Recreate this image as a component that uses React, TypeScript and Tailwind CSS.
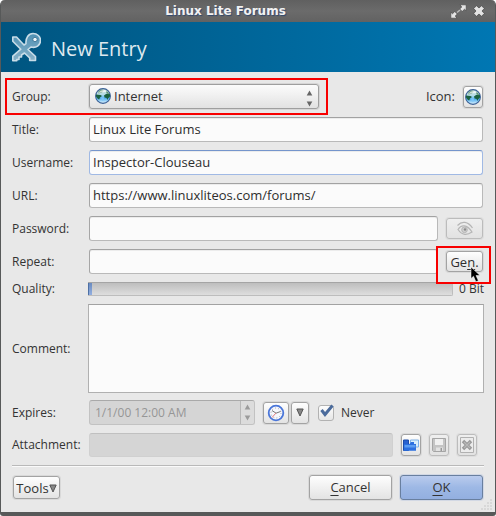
import React from 'react';

const FIELD =
  'h-[25px] min-w-0 flex-1 rounded-[3px] border border-[#b9b9b9] border-t-[#a2a2a2] border-l-[#a6a6a6] bg-[#fbfbfb] px-[3px] pb-px text-[13px] text-[#2e2e2e] shadow-[inset_0_1px_0_#ececec] outline-none';
const BUTTON =
  'flex items-center justify-center rounded-[3px] border border-[#a3a3a3] bg-linear-to-b from-[#fefefe] to-[#e3e3e3] shadow-[0_0_0_1px_#d9d9d9]';
const BUTTON_OFF =
  'flex items-center justify-center rounded-[3px] border border-[#bcbcbc] bg-linear-to-b from-[#efefef] to-[#e2e2e2] shadow-[0_0_0_1px_#dedede]';
const LABEL = 'w-[77px] shrink-0 text-[12px]';

function Globe() {
  return (
    <svg width="16" height="16" viewBox="0 0 16 16" aria-hidden="true">
      <defs>
        <linearGradient id="sea" x1="0" y1="0" x2="0" y2="1">
          <stop offset="0" stopColor="#cfe3dc" />
          <stop offset=".4" stopColor="#b5dce6" />
          <stop offset=".65" stopColor="#51aef0" />
          <stop offset="1" stopColor="#e6f8ff" />
        </linearGradient>
      </defs>
      <circle cx="8" cy="8" r="7.4" fill="url(#sea)" stroke="#3a5f94" strokeWidth="1.1" />
      <path d="M1 6.500l4.500.5 1.500 1-2 1.500-.8 2-1.200-.5-2-2.500zM9 7.500l2-1.500h4v2.500l-2 2-.5 1.500-1-2-2-.5z" fill="#1a6140" />
      <path d="M3.500 3l3.500-1.500 2 1-2 2-3.500 1zM11 2.500l2 1.500 1.500 2.500-3-1z" fill="#5d9474" />
      <path d="M3.500 5C5 1.500 10 1 12 3.500c-2 1-5 .3-8.500 1.500z" fill="#fff" opacity=".7" />
      <path d="M6 9.500h3l-.5 3H7z" fill="#7cc6fa" />
    </svg>
  );
}

function Arrows({ color, className }: { color: string; className: string }) {
  return (
    <svg className={className} width="7" height="17" viewBox="0 0 7 17" aria-hidden="true">
      <path d="M.7 5.500L3.500.5 6.300 5.500zM.7 11.500h5.600L3.500 16.500z" fill={color} />
    </svg>
  );
}

function DownArrow() {
  return (
    <svg width="8" height="9" viewBox="0 0 8 9" aria-hidden="true">
      <path d="M.8 1h6.400L4 8z" fill="#888" stroke="#555" />
    </svg>
  );
}

function CrossedKey() {
  return (
    <svg width="30" height="30" viewBox="0 0 30 30" aria-hidden="true">
      <defs>
        <linearGradient id="steel" x1="0" y1="0" x2="0" y2="1">
          <stop offset="0" stopColor="#4f91b4" />
          <stop offset="1" stopColor="#88b2c8" />
        </linearGradient>
      </defs>
      <path
        d="M1.800 5h3.700l7.500 8 2-1.500C14.500 6 17.500 1.500 22 1.500c4.300 0 7.500 3 7.500 6.800 0 5-4.500 8.200-9.500 6.700l-3 2.500 7.500 7v4h-5.800v-2.500l-5.200-5-3 2v2H8v2.500H5.800v1.200H1.800v-4.500l8-7-8-8z"
        fill="url(#steel)"
        stroke="#c9dde8"
        strokeWidth="1.600"
        strokeLinejoin="round"
      />
      <circle cx="24" cy="7.500" r="2.200" fill="#f1f7fa" stroke="#28668a" strokeWidth=".8" />
    </svg>
  );
}

function TitleBar() {
  return (
    <header className="flex h-[22px] items-center rounded-t-[4px] bg-linear-to-b from-[#606060] via-[#6b6b6b] to-[#626262] pr-[10px]">
      <h1 className="flex-1 text-center font-['DejaVu_Sans'] text-[12px] leading-[20px] font-bold text-[#f2f2f2] [text-shadow:1px_1px_1px_#30476e]">
        Linux Lite Forums
      </h1>
      <div className="flex items-center gap-[6px]">
        <button aria-label="Maximize">
          <svg width="17" height="15" viewBox="0 0 17 15">
            <path
              d="M10 .8h6.200v6l-1.700-1.500-2.300 2.200-2.500-2.500 2-2zM.8 8.200l1.700 1.500 2.300-2.200 2.500 2.500-2 2 1.700 2.200H.8z"
              fill="#e4e4e4"
              stroke="#484848"
              strokeWidth=".7"
            />
            <path d="M7 8.500l3-2.500" stroke="#bdbdbd" strokeWidth="1.500" />
          </svg>
        </button>
        <button aria-label="Close">
          <svg width="12" height="12" viewBox="0 0 12 12">
            <path
              d="M3.500.7L6 3 8.500.7l2.800 2.800L9 6l2.300 2.500-2.800 2.800L6 9l-2.500 2.300L.7 8.500 3 6 .7 3.500z"
              fill="#e4e4e4"
              stroke="#484848"
              strokeWidth=".7"
            />
          </svg>
        </button>
      </div>
    </header>
  );
}

function TextRow({ id, label, value, focused }: { id: string; label: string; value: string; focused?: boolean }) {
  return (
    <div className="flex items-center pr-px">
      <label className={LABEL} htmlFor={id}>{label}</label>
      <input
        id={id}
        defaultValue={value}
        className={focused ? `${FIELD} !border-[#a0b9e4] !border-t-[#7595cc]` : FIELD}
      />
    </div>
  );
}

export default function App() {
  return (
    <main className="relative rounded-t-[5px] rounded-b-[3px] border-x border-b-4 border-[#575959] bg-[#e8e8e8] font-['Open_Sans',sans-serif] text-[13px] leading-[18px] text-[#333]">
      <TitleBar />
      <div className="flex h-[50px] items-center gap-[10px] bg-linear-to-r from-[#005580] to-[#0077b3] pl-[10px]">
        <CrossedKey />
        <h2 className="pt-[3px] text-[20px] leading-[28px] text-[#dfe9ef]">New Entry</h2>
      </div>

      <form className="px-[11px] pt-3 pb-[12px]" onSubmit={(e) => e.preventDefault()}>
        <div className="flex flex-col gap-2">
          <div className="relative flex items-center pr-px">
            <label className={LABEL} htmlFor="group">Group:</label>
            <div className="relative w-[230px]">
              <select
                id="group"
                className="block h-[25px] w-full appearance-none rounded-[3px] border border-[#9f9f9f] bg-linear-to-b from-[#fcfcfc] to-[#e2e2e2] pb-px pl-[24px] shadow-[0_0_0_1px_#d6d6d6] outline-none"
              >
                <option>Internet</option>
              </select>
              <span className="pointer-events-none absolute top-[4px] left-[6px]"><Globe /></span>
              <Arrows color="#666" className="pointer-events-none absolute top-[6px] right-[6px]" />
            </div>
            <span className="flex-1" />
            <label className="mr-2 pb-px" htmlFor="icon">Icon:</label>
            <button id="icon" type="button" aria-label="Icon" className={`${BUTTON} h-[22px] w-[20px]`}>
              <Globe />
            </button>
            <span className="pointer-events-none absolute -top-[6px] -left-[7px] h-[37px] w-[323px] border-2 border-[#f80000]" />
          </div>

          <TextRow id="title" label="Title:" value="Linux Lite Forums" />
          <TextRow id="username" label="Username:" value="Inspector-Clouseau" focused />
          <TextRow id="url" label="URL:" value="https://www.linuxliteos.com/forums/" />

          <div className="flex items-center pr-px">
            <label className={LABEL} htmlFor="password">Password:</label>
            <input id="password" type="password" className={FIELD} />
            <button type="button" aria-label="Show password" className={`${BUTTON_OFF} ml-2 h-[21px] w-[37px]`}>
              <svg width="18" height="15" viewBox="0 0 18 15" fill="none" stroke="#b5b5b5">
                <path d="M1.500 4.500C6-.5 12 .5 16.500 7M2 8.500c3-5 9-5.500 14 2.500-5 3.500-10 3.500-14-2.500z" strokeWidth="1.200" />
                <circle cx="8.500" cy="8.800" r="2.800" fill="#cfcfcf" />
                <circle cx="9" cy="8.500" r="1.200" fill="#8b8b8b" stroke="none" />
              </svg>
            </button>
          </div>

          <div className="relative flex items-center pr-px">
            <label className={LABEL} htmlFor="repeat">Repeat:</label>
            <input id="repeat" type="password" className={FIELD} />
            <button type="button" className={`${BUTTON} ml-2 h-[21px] w-[37px] text-[#2e2e2e]`}>
              <span>Ge<span className="underline underline-offset-2">n</span>.</span>
            </button>
            <span className="pointer-events-none absolute -top-[3px] -right-[7px] h-[38px] w-[55px] border-2 border-[#f80000]" />
            <svg className="pointer-events-none absolute top-[17px] right-[3px]" width="11" height="17" viewBox="0 0 11 17" aria-hidden="true">
              <path d="M1 1v11.500l2.500-2.300 2.400 5.500 2.500-1L6 9.500h4z" fill="#000" stroke="#fff" strokeWidth=".5" />
            </svg>
          </div>

          <div className="flex h-[14px] items-center text-[12px]">
            <span id="quality" className="w-[76px] shrink-0">Quality:</span>
            <div
              role="progressbar"
              aria-labelledby="quality"
              aria-valuenow={0}
              className="h-[14px] flex-1 rounded-r-[2px] border border-l-0 border-[#bdbdbd] border-t-[#a5a5a5] bg-linear-to-b from-[#bebebe] to-[#dedede]"
            >
              <div className="h-full w-[4px] border-l border-[#4d70a5] bg-linear-to-b from-[#6a8bc0] to-[#93afe0]" />
            </div>
            <span className="ml-[6px]">0 Bit</span>
          </div>

          <div className="flex items-center">
            <label className="w-[76px] shrink-0 text-[12px]" htmlFor="comment">Comment:</label>
            <textarea
              id="comment"
              className="block h-[89px] min-w-0 flex-1 resize-none border border-[#b0b0b0] border-t-[#a2a2a2] bg-[#fbfbfb] p-1 outline-none"
            />
          </div>
        </div>

        <div className="mt-[7px] flex items-center">
          <label className={LABEL} htmlFor="expires">Expires:</label>
          <div className="relative w-[166px]">
            <input
              id="expires"
              disabled
              defaultValue="1/1/00 12:00 AM"
              className="block h-[25px] w-full rounded-[3px] border border-[#c2c2c2] border-t-[#a9a9a9] bg-[#d5d5d5] pl-[5px] text-[12px] text-[#969696]"
            />
            <span className="absolute top-px right-px h-[23px] w-[14px] rounded-r-[2px] border-l border-[#b8b8b8] bg-[#dcdcdc]" />
            <Arrows color="#9b9b9b" className="absolute top-[4px] right-[4px]" />
          </div>
          <button type="button" aria-label="Presets" className={`${BUTTON} ml-[8px] h-[22px] w-[26px]`}>
            <svg width="18" height="18" viewBox="0 0 18 18">
              <circle cx="9" cy="9" r="7.300" fill="#f6f7fc" stroke="#4a76d9" strokeWidth="1.800" />
              <circle cx="9" cy="9" r="5" fill="none" stroke="#a3a3ad" strokeDasharray="1 2.140" />
              <path d="M5 6.500l4 2.700 4.500-1.700" fill="none" stroke="#777" />
              <path d="M9 9l-4 4.500" stroke="#e47c7c" />
            </svg>
          </button>
          <button type="button" aria-label="More presets" className={`${BUTTON} ml-[2px] h-[22px] w-[18px]`}>
            <DownArrow />
          </button>
          <label className="ml-[9px] flex items-center text-[12px]">
            <span className="relative mr-[7px] h-[16px] w-[16px]">
              <input
                type="checkbox"
                defaultChecked
                className="block h-[16px] w-[16px] appearance-none rounded-[3px] border border-[#b2b2b2] bg-linear-to-b from-[#fdfdfd] to-[#e6e6e6]"
              />
              <svg className="pointer-events-none absolute -top-[1px] left-[2px]" width="14" height="13" viewBox="0 0 14 13" aria-hidden="true">
                <path d="M1.500 6l3.500 4.500L12.500 1.500" fill="none" stroke="#4b6b9c" strokeWidth="3" />
              </svg>
            </span>
            Never
          </label>
        </div>

        <div className="mt-2 flex items-center pr-[7px]">
          <label className={LABEL} htmlFor="attachment">Attachment:</label>
          <input
            id="attachment"
            disabled
            className="mr-[8px] h-[24px] min-w-0 flex-1 rounded-[3px] border border-[#d0d0d0] border-t-[#c0c0c0] bg-[#d5d5d5]"
          />
          <div className="flex gap-2">
            <button type="button" aria-label="Attach file" className={`${BUTTON} h-[22px] w-[20px]`}>
              <svg width="16" height="14" viewBox="0 0 16 14">
                <path d="M.5 2h5v10.500h-5z" fill="#2a62cf" stroke="#1d4ca9" />
                <path d="M7.500 5V2h8v7h-3z" fill="#d9eefc" stroke="#7fb0e6" />
                <path d="M1 6h5.500l1.500-2h3v2h2V12.800H1z" fill="#2c70e0" />
                <path d="M1.500 7h11v2.500h-11z" fill="#5c9df2" />
              </svg>
            </button>
            <button type="button" disabled aria-label="Save attachment" className={`${BUTTON_OFF} h-[22px] w-[20px]`}>
              <svg width="14" height="14" viewBox="0 0 14 14">
                <path d="M.5.5h13v13h-12l-1-1z" fill="#c4c4c4" stroke="#a5a5a5" />
                <path d="M3 1h8v6H3z" fill="#f0f0f0" />
                <path d="M4 9.500h7V13H4z" fill="#e2e2e2" />
                <path d="M8.500 10h1.500v3H8.500z" fill="#999" />
              </svg>
            </button>
            <button type="button" disabled aria-label="Remove attachment" className={`${BUTTON_OFF} h-[22px] w-[20px]`}>
              <svg width="14" height="16" viewBox="0 0 14 16">
                <path d="M.5.5h13v15H.5z" fill="#ececec" stroke="#b1b1b1" />
                <path d="M3 4l8 8m0-8l-8 8" stroke="#999" strokeWidth="3.400" />
                <path d="M4 5l6 6m0-6l-6 6" stroke="#b8b8b8" strokeWidth="1.200" />
              </svg>
            </button>
          </div>
        </div>

        <hr className="mt-2 border-t border-b border-t-[#b9b9b9] border-b-[#fafafa]" />

        <div className="mt-2 flex items-center gap-2 pr-px">
          <button type="button" className={`${BUTTON} ml-px h-[23px] w-[47px]`}>
            Tools
            <span className="pt-[2px]"><DownArrow /></span>
          </button>
          <span className="flex-1" />
          <button type="button" className={`${BUTTON} h-[25px] w-[83px] pb-px`}>
            <span><span className="underline underline-offset-3">C</span>ancel</span>
          </button>
          <button
            type="submit"
            className="flex h-[25px] w-[83px] items-center justify-center rounded-[3px] border border-[#697f9f] bg-linear-to-b from-[#bacbed] via-[#9db8e5] to-[#93afe0] pb-px shadow-[0_0_0_1px_#d2d8e4]"
          >
            <span><span className="underline underline-offset-3">O</span>K</span>
          </button>
        </div>
      </form>
      <svg className="absolute right-[2px] bottom-px" width="12" height="12" viewBox="0 0 12 12" aria-hidden="true">
        <path
          d="M9 1h2M6 4h2M9 4h2M3 7h2M6 7h2M9 7h2M0 10h2M3 10h2M6 10h2M9 10h2"
          stroke="#c8c8c8"
          strokeWidth="1.200"
        />
      </svg>
    </main>
  );
}
